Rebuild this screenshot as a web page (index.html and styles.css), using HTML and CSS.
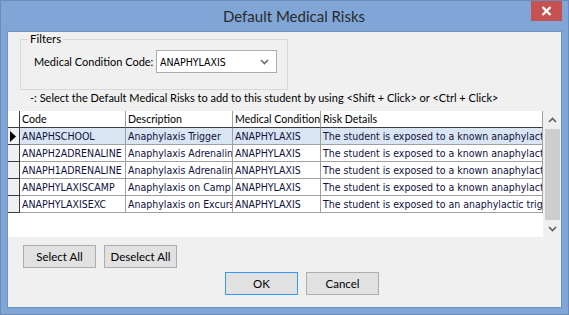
FILE: index.html
```html
<!DOCTYPE html>
<html>
<head>
<meta charset="utf-8">
<link rel="stylesheet" href="styles.css">
</head>
<body>
<div class="window">
  <div class="titlebar">
    <div class="title">Default Medical Risks</div>
    <div class="close"><svg width="11" height="10" viewBox="0 0 11 10"><path d="M1.5 1 L9.5 9 M9.5 1 L1.5 9" stroke="#fff" stroke-width="2.4" fill="none"/></svg></div>
  </div>
  <div class="client">
    <fieldset class="filters">
      <legend>Filters</legend>
      <div class="filter-row">
        <span class="label">Medical Condition Code:</span>
        <div class="combo">
          <span class="combo-value">ANAPHYLAXIS</span>
          <svg class="combo-arrow" width="9" height="6" viewBox="0 0 9 6"><path d="M1 1 L4.5 4.5 L8 1" stroke="#6b6b6b" stroke-width="1.6" fill="none"/></svg>
        </div>
      </div>
    </fieldset>
    <div class="hint">-: Select the Default Medical Risks to add to this student by using &lt;Shift + Click&gt; or &lt;Ctrl + Click&gt;</div>
    <div class="gridbox">
      <div class="grid">
        <div class="hcell corner"></div>
        <div class="hcell">Code</div>
        <div class="hcell">Description</div>
        <div class="hcell">Medical Condition</div>
        <div class="hcell">Risk Details</div>

        <div class="rh cur"><svg width="6" height="11" viewBox="0 0 6 11"><path d="M0 0 L6 5.5 L0 11 Z" fill="#000"/></svg></div>
        <div class="cell sel">ANAPHSCHOOL</div>
        <div class="cell sel">Anaphylaxis Trigger</div>
        <div class="cell sel">ANAPHYLAXIS</div>
        <div class="cell sel">The student is exposed to a known anaphylactic trigger at school</div>

        <div class="rh"></div>
        <div class="cell">ANAPH2ADRENALINE</div>
        <div class="cell">Anaphylaxis Adrenaline</div>
        <div class="cell">ANAPHYLAXIS</div>
        <div class="cell">The student is exposed to a known anaphylactic trigger</div>

        <div class="rh"></div>
        <div class="cell">ANAPH1ADRENALINE</div>
        <div class="cell">Anaphylaxis Adrenaline</div>
        <div class="cell">ANAPHYLAXIS</div>
        <div class="cell">The student is exposed to a known anaphylactic trigger</div>

        <div class="rh"></div>
        <div class="cell">ANAPHYLAXISCAMP</div>
        <div class="cell">Anaphylaxis on Camp</div>
        <div class="cell">ANAPHYLAXIS</div>
        <div class="cell">The student is exposed to a known anaphylactic trigger on camp</div>

        <div class="rh"></div>
        <div class="cell">ANAPHYLAXISEXC</div>
        <div class="cell">Anaphylaxis on Excursion</div>
        <div class="cell">ANAPHYLAXIS</div>
        <div class="cell">The student is exposed to an anaphylactic trigger on excursion</div>
      </div>
      <div class="scrollbar">
        <div class="sb-arrow"><svg width="9" height="6" viewBox="0 0 9 6"><path d="M1 5 L4.5 1.5 L8 5" stroke="#606060" stroke-width="1.6" fill="none"/></svg></div>
        <div class="sb-track"><div class="sb-thumb"></div></div>
        <div class="sb-arrow"><svg width="9" height="6" viewBox="0 0 9 6"><path d="M1 1 L4.5 4.5 L8 1" stroke="#606060" stroke-width="1.6" fill="none"/></svg></div>
      </div>
    </div>
    <div class="btnrow">
      <button class="btn">Select All</button>
      <button class="btn">Deselect All</button>
    </div>
    <div class="btnrow2">
      <button class="btn default">OK</button>
      <button class="btn">Cancel</button>
    </div>
  </div>
</div>
</body>
</html>
```
FILE: styles.css
```css
* { box-sizing: border-box; }
html, body { margin: 0; padding: 0; }
body {
  width: 569px;
  height: 315px;
  overflow: hidden;
  font-family: Lato, "Noto Sans", sans-serif;
  font-size: 11px;
  color: #000;
}
.window {
  width: 569px;
  height: 315px;
  background: #7fa6d6;
  border: 1px solid #6a8cb8;
  display: flex;
  flex-direction: column;
}
.titlebar {
  height: 30px;
  display: flex;
  align-items: flex-start;
}
.title {
  flex: 1;
  text-align: center;
  padding-left: 56px;
  padding-top: 5px;
  font-size: 15px;
  color: #2a2a2a;
  line-height: 20px;
}
.close {
  width: 31px;
  height: 20px;
  margin-right: 6px;
  background: #c75050;
  display: flex;
  align-items: center;
  justify-content: center;
}
.client {
  margin-left: 6px;
  width: 555px;
  height: 277px;
  background: #f0f0f0;
  border: 1px solid #6f92bf;
  display: flex;
  flex-direction: column;
}
.filters {
  margin: 0 0 0 12px;
  padding: 0;
  width: 268px;
  height: 58px;
  border: 1px solid #d8d8d8;
}
.filters legend {
  margin-left: 7px;
  padding: 0 2px;
  font-size: 11.5px;
  line-height: 14px;
}
.filter-row {
  display: flex;
  align-items: center;
  margin-top: 4px;
  padding-left: 13px;
}
.label {
  width: 122px;
  white-space: nowrap;
}
.combo {
  width: 121px;
  height: 23px;
  background: #fff;
  border: 1px solid #acacac;
  display: flex;
  align-items: center;
  justify-content: space-between;
  padding: 0 7px 0 3px;
}
.combo-value {
  font-family: "DejaVu Sans Condensed", "DejaVu Sans", sans-serif;
  font-size: 10.5px;
}
.hint {
  margin: 0 0 0 22px;
  height: 16px;
  line-height: 16px;
  white-space: nowrap;
}
.gridbox {
  margin-top: 5px;
  height: 126px;
  display: flex;
}
.grid {
  width: 535px;
  background: #fff;
  display: grid;
  grid-template-columns: 12px 106px 107px 88px 222px;
  grid-auto-rows: 17px;
  align-content: start;
}
.hcell {
  background: #fff;
  border-right: 1px solid #a0a0a0;
  border-bottom: 1px solid #3c3c3c;
  padding-left: 2px;
  line-height: 16px;
  font-size: 10.6px;
  white-space: nowrap;
  overflow: hidden;
}
.hcell.corner { border-right-color: #3c3c3c; }
.rh {
  background: #f0f0f0;
  border-right: 1px solid #3c3c3c;
  border-bottom: 1px solid #3c3c3c;
  display: flex;
  align-items: center;
  padding-left: 2px;
}
.cell {
  border-right: 1px solid #a0a0a0;
  border-bottom: 1px solid #a0a0a0;
  padding-left: 2px;
  line-height: 17px;
  white-space: nowrap;
  overflow: hidden;
  font-family: "DejaVu Sans Condensed", "DejaVu Sans", sans-serif;
  font-size: 10.5px;
  color: #10103a;
}
.cell.sel { background: #d9e5f3; }
.scrollbar {
  width: 18px;
  display: flex;
  flex-direction: column;
  background: #f0f0f0;
}
.sb-arrow {
  height: 17px;
  display: flex;
  align-items: center;
  justify-content: center;
}
.sb-track {
  flex: 1;
  padding: 1px 1px 0 2px;
}
.sb-thumb {
  height: 91px;
  background: #cdcdcd;
}
.btnrow {
  display: flex;
  gap: 8px;
  margin: 8px 0 0 15px;
}
.btnrow2 {
  display: flex;
  gap: 8px;
  margin: 4px 0 0 217px;
}
.btn {
  width: 73px;
  height: 23px;
  background: #e1e1e1;
  border: 1px solid #adadad;
  font-family: Lato, "Noto Sans", sans-serif;
  font-size: 11.5px;
  color: #000;
  padding: 0;
}
.btn.default { border-color: #3399ff; }
```
